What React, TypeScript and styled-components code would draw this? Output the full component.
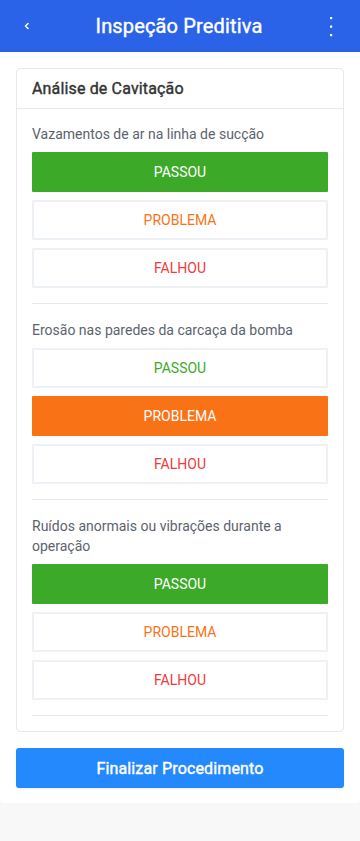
import React from "react";
import styled, { createGlobalStyle } from "styled-components";

const Global = createGlobalStyle`
  * { box-sizing: border-box; }
  html, body { margin: 0; padding: 0; background: #f8f8f8; }
  body { font-family: Roboto, "Noto Sans", Arial, sans-serif; -webkit-font-smoothing: antialiased; }
  button { font-family: inherit; }
`;

const medium = `font-weight: 400; -webkit-text-stroke: 0.4px currentColor; letter-spacing: 0.15px;`;

const Header = styled.header`
  height: 52px;
  background: #2a63e8;
  display: flex;
  align-items: center;
  justify-content: space-between;
  padding: 0 20px 0 18px;
  color: #fff;
`;

const IconButton = styled.span`
  width: 18px;
  height: 18px;
  display: flex;
  align-items: center;
  justify-content: center;
`;

const Title = styled.h1`
  margin: 0;
  font-size: 20px;
  ${medium}
`;

const Main = styled.main`
  background: #fff;
  padding: 16px 16px 15px;
  border-radius: 0 0 4px 4px;
  display: flex;
  flex-direction: column;
  gap: 16px;
`;

const Card = styled.section`
  border: 1px solid #e6e9ed;
  border-radius: 4px;
  background: #fff;
`;

const CardHeader = styled.div`
  height: 40px;
  border-bottom: 1px solid #e6e9ed;
  display: flex;
  align-items: center;
  padding: 0 15px;
  font-size: 16px;
  ${medium}
  color: #333;
`;

const CardBody = styled.div`
  padding: 15px 15px 15px;
`;

const Item = styled.div<{ $first?: boolean }>`
  padding-top: ${(p) => (p.$first ? "0" : "16px")};
  padding-bottom: 15px;
  border-bottom: 1px solid #e6e9ed;
  display: flex;
  flex-direction: column;
  gap: 8px;
`;

const Label = styled.div`
  font-size: 14px;
  line-height: 20px;
  color: #5c636e;
`;

const Options = styled.div`
  display: flex;
  flex-direction: column;
  gap: 8px;
`;

type Kind = "pass" | "problem" | "fail";
const colors: Record<Kind, string> = {
  pass: "#3caa28",
  problem: "#f97316",
  fail: "#ef3b3b",
};

const Option = styled.button<{ $kind: Kind; $active: boolean }>`
  height: 40px;
  width: 100%;
  border: ${(p) => (p.$active ? "none" : "2px solid #edf1f5")};
  background: ${(p) => (p.$active ? colors[p.$kind] : "#fff")};
  color: ${(p) => (p.$active ? "#fff" : colors[p.$kind])};
  font-size: 14px;
  font-weight: 400;
  text-transform: uppercase;
  border-radius: 1px;
  padding: 0;
  cursor: pointer;
`;

const Finish = styled.button`
  height: 40px;
  width: 100%;
  border: none;
  border-radius: 3px;
  background: #2589fe;
  color: #fff;
  font-size: 16px;
  ${medium}
  box-shadow: 0 1px 2px rgba(0, 0, 0, 0.08);
`;

const items: { label: string; value: Kind }[] = [
  { label: "Vazamentos de ar na linha de sucção", value: "pass" },
  { label: "Erosão nas paredes da carcaça da bomba", value: "problem" },
  { label: "Ruídos anormais ou vibrações durante a operação", value: "pass" },
];

const opts: { kind: Kind; text: string }[] = [
  { kind: "pass", text: "Passou" },
  { kind: "problem", text: "Problema" },
  { kind: "fail", text: "Falhou" },
];

export default function App() {
  return (
    <>
      <Global />
      <Header>
        <IconButton>
          <svg width="10" height="10" viewBox="0 0 10 10">
            <path d="M6 2.5 L3.5 5 L6 7.5" stroke="#fff" strokeWidth="1.5" fill="none" strokeLinecap="round" strokeLinejoin="round" />
          </svg>
        </IconButton>
        <Title>Inspeção Preditiva</Title>
        <IconButton>
          <svg width="4" height="22" viewBox="0 0 4 22">
            <rect x="1" y="2" width="2.2" height="2.2" fill="#fff" />
            <rect x="1" y="10.5" width="2.2" height="2.2" fill="#fff" />
            <rect x="1" y="19" width="2.2" height="2.2" fill="#fff" />
          </svg>
        </IconButton>
      </Header>
      <Main>
        <Card>
          <CardHeader>Análise de Cavitação</CardHeader>
          <CardBody>
            {items.map((it, i) => (
              <Item key={i} $first={i === 0}>
                <Label>{it.label}</Label>
                <Options>
                  {opts.map((o) => (
                    <Option key={o.kind} $kind={o.kind} $active={o.kind === it.value}>
                      {o.text}
                    </Option>
                  ))}
                </Options>
              </Item>
            ))}
          </CardBody>
        </Card>
        <Finish>Finalizar Procedimento</Finish>
      </Main>
    </>
  );
}
